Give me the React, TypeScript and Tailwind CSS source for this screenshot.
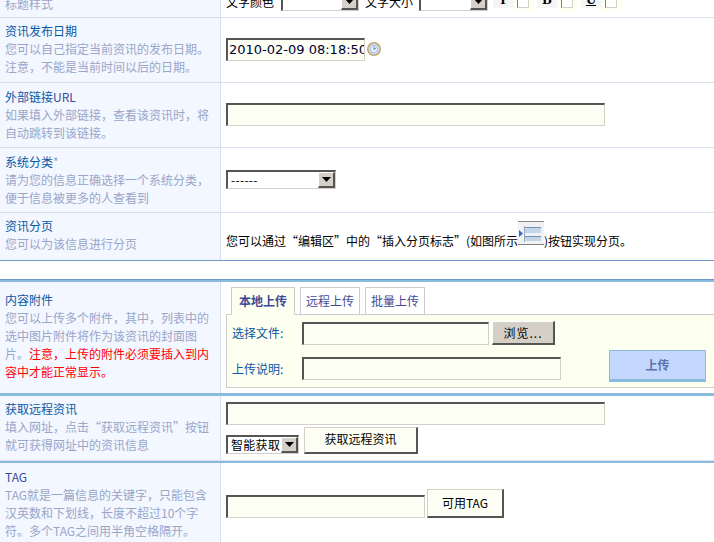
import React from 'react';

const cjk = "font-['Noto_Sans_CJK_SC',sans-serif]";

const insetBox = 'border-2 border-t-[#555555] border-l-[#555555] border-r-[#d4d0c8] border-b-[#d4d0c8] border-r-[1px] border-b-[1px] bg-[#fdfff5]';
const outsetBtn = 'border-t-[1px] border-l-[1px] border-b-2 border-r-2 border-t-[#d4d0c8] border-l-[#d4d0c8] border-r-[#555555] border-b-[#555555] bg-[#fdfff5] text-xs text-black';

function TextBox({ className, value }: { className: string; value?: string }) {
  return (
    <input
      readOnly
      value={value ?? ''}
      className={`${insetBox} block outline-none ${className}`}
    />
  );
}

function FakeSelect({ className, text }: { className: string; text?: string }) {
  return (
    <div className={`flex border-2 border-t-[#555555] border-l-[#555555] border-r-[#d4d0c8] border-b-[#d4d0c8] border-r-[1px] border-b-[1px] bg-white ${className}`}>
      <span className="flex-1 overflow-hidden pl-[3px] text-xs leading-[16px] tracking-[0.3px] text-black whitespace-nowrap">{text}</span>
      <span className="flex w-[17px] items-center justify-center border-t border-l border-b-2 border-r-2 border-t-white border-l-white border-r-[#555555] border-b-[#555555] bg-[#d4d0c8]">
        <svg width="9" height="5" viewBox="0 0 9 5"><path d="M0 0h9L4.5 5z" fill="#000" /></svg>
      </span>
    </div>
  );
}

function Hint({ title, lines, pt }: { title: React.ReactNode; lines: React.ReactNode[]; pt: string }) {
  return (
    <div className={`w-[221px] shrink-0 border-r border-[#d8e0ee] bg-[#f3f7ff] pl-[5px] ${pt}`}>
      <div className="text-xs leading-[18px] text-[#0b57a4] whitespace-nowrap">{title}</div>
      {lines.map((line, i) => (
        <div key={i} className="text-xs leading-[18px] text-[#9aa6c8] whitespace-nowrap">{line}</div>
      ))}
    </div>
  );
}

function ClockIcon() {
  return (
    <svg width="14" height="14" viewBox="0 0 14 14" className="ml-[2px] shrink-0">
      <circle cx="7" cy="7" r="6.2" fill="#d5e4f7" stroke="#c2a26e" strokeWidth="1.5" />
      <circle cx="7" cy="7" r="3.8" fill="#e8f0fb" stroke="#8fb2dd" strokeWidth="0.8" />
      <path d="M7 4.5V7.5l2-1.5" fill="none" stroke="#6c87a8" strokeWidth="1" />
    </svg>
  );
}

function PageBreakIcon() {
  return (
    <svg width="26" height="24" viewBox="0 0 26 24" className="shrink-0">
      <rect width="26" height="24" fill="#f0f1f4" />
      <rect width="26" height="1" fill="#888888" />
      <rect y="23" width="26" height="1" fill="#808080" />
      <rect x="7" y="7" width="16" height="5" fill="#c4d5ea" />
      <rect x="7" y="6" width="16" height="1" fill="#7d90aa" />
      <rect x="7" y="15" width="16" height="5" fill="#c4d5ea" />
      <rect x="7" y="15" width="16" height="1" fill="#7d90aa" />
      <rect x="6" y="5" width="1" height="16" fill="#9aa8ba" />
      <path d="M1 9l4 3.5L1 16z" fill="#2f6fd0" />
    </svg>
  );
}

function StyleToggle({ letter, className }: { letter: string; className: string }) {
  return (
    <div className="mr-[4px] flex h-[11px] items-start">
      <span className={`h-[8px] w-[20px] overflow-hidden bg-[#f5f5f5] text-center font-['Liberation_Serif',serif] text-[14px] leading-[12px] text-black ${className}`}>
        <span className="-mt-[6px] block">{letter}</span>
      </span>
      <span className="h-[11px] w-[20px] bg-[#fdfff0] pl-[4px]">
        <span className="block h-[8px] w-[12px] border-r border-b border-l border-r-[#d4d0c8] border-b-[#d4d0c8] border-l-[#808080] bg-white" />
      </span>
    </div>
  );
}

function Tab({ children, active, className }: { children: React.ReactNode; active?: boolean; className: string }) {
  return (
    <div className={`flex items-center justify-center border border-[#cccccc] text-xs text-[#3f4a96] ${active ? 'relative z-10 -mb-px h-[28px] border-b-[#fdfff0] bg-[#fdfff0] font-bold' : 'h-[27px] border-b-0 bg-white'} ${className}`}>
      {children}
    </div>
  );
}

export default function App() {
  return (
    <div className={`h-[542px] w-[714px] overflow-hidden bg-white ${cjk}`}>
      {/* cut off row at the top */}
      <div className="flex h-[18px] overflow-hidden border-b border-[#d8e0ee]">
        <div className="h-full w-[221px] shrink-0 overflow-hidden border-r border-[#d8e0ee] bg-[#f3f7ff] pl-[5px]">
          <div className="-mt-[5px] text-xs leading-[18px] text-[#9aa6c8]">标题样式</div>
        </div>
        <div className="flex h-[17px] items-end pb-[6px] pl-[5px]">
          <span className="w-[55px] text-xs leading-[18px] text-black">文字颜色</span>
          <FakeSelect className="h-[19px] w-[78px]" />
          <span className="ml-[6px] w-[54px] text-xs leading-[18px] text-black">文字大小</span>
          <FakeSelect className="h-[19px] w-[69px]" />
          <div className="ml-[5px] flex">
            <StyleToggle letter="I" className="font-bold" />
            <StyleToggle letter="B" className="font-bold" />
            <StyleToggle letter="U" className="font-bold underline" />
          </div>
        </div>
      </div>

      <div className="flex h-[65px] border-b border-[#d8e0ee]">
        <Hint
          pt="pt-[4px]"
          title="资讯发布日期"
          lines={['您可以自己指定当前资讯的发布日期。', '注意，不能是当前时间以后的日期。']}
        />
        <div className="flex items-center pb-[2px] pl-[5px]">
          <TextBox className="h-[23px] w-[139px] pl-[1px] font-['DejaVu_Sans',sans-serif] text-[13px] text-[#000033]" value="2010-02-09 08:18:50" />
          <ClockIcon />
        </div>
      </div>

      <div className="flex h-[65px] border-b border-[#d8e0ee]">
        <Hint
          pt="pt-[5px]"
          title={<>外部链接<span className="text-[#3f4a96]">URL</span></>}
          lines={['如果填入外部链接，查看该资讯时，将', '自动跳转到该链接。']}
        />
        <div className="flex items-center pb-[1px] pl-[5px]">
          <TextBox className="h-[23px] w-[379px]" />
        </div>
      </div>

      <div className="flex h-[65px] border-b border-[#d8e0ee]">
        <Hint
          pt="pt-[5px]"
          title={<>系统分类<span className="text-[#9aa6c8]">*</span></>}
          lines={['请为您的信息正确选择一个系统分类，', '便于信息被更多的人查看到']}
        />
        <div className="flex items-center pb-[2px] pl-[5px]">
          <FakeSelect className="h-[19px] w-[110px]" text="------" />
        </div>
      </div>

      <div className="flex h-[48px] border-b border-[#6f94c8]">
        <Hint pt="pt-[4px]" title="资讯分页" lines={['您可以为该信息进行分页']} />
        <div className="flex items-end pb-[10px] pl-[5px] text-xs leading-[18px] text-black whitespace-nowrap">
          <span>您可以通过“编辑区”中的“插入分页标志”(如图所示</span>
          <span className="mb-[5px]"><PageBreakIcon /></span>
          <span>)按钮实现分页。</span>
        </div>
      </div>

      <div className="h-[18px]" />

      <div className="border-t border-[#6f94c8]" />
      <div className="border-t-2 border-[#88bbdd]" />

      <div className="flex h-[111px]">
        <Hint
          pt="pt-[9px]"
          title="内容附件"
          lines={[
            '您可以上传多个附件，其中，列表中的',
            '选中图片附件将作为该资讯的封面图',
            <>片。<span className="text-[#ff0000]">注意，上传的附件必须要插入到内</span></>,
            <span className="text-[#ff0000]">容中才能正常显示。</span>,
          ]}
        />
        <div className="flex-1 pl-[5px] pt-[5px]">
          <div className="flex gap-[5px] pl-[5px]">
            <Tab active className="w-[64px]">本地上传</Tab>
            <Tab className="w-[60px]">远程上传</Tab>
            <Tab className="w-[60px]">批量上传</Tab>
          </div>
          <div className="flex h-[74px] justify-between border-t border-b border-l border-[#cccccc] bg-[#fdfff0]">
            <div className="pl-[5px] pt-[6px]">
              <div className="flex items-center">
                <span className="w-[70px] text-xs leading-[18px] text-[#0b57a4]">选择文件:</span>
                <TextBox className="h-[23px] w-[187px]" />
                <button className="ml-[3px] h-[24px] w-[63px] border-t border-l border-b-2 border-r-2 border-t-white border-l-white border-r-[#555555] border-b-[#555555] bg-[#d4d0c8] text-xs tracking-[1px] text-black">浏览...</button>
              </div>
              <div className="mt-[12px] flex items-center">
                <span className="w-[70px] text-xs leading-[18px] text-[#0b57a4]">上传说明:</span>
                <TextBox className="h-[23px] w-[259px]" />
              </div>
            </div>
            <div className="pr-[8px] pt-[35px]">
              <button className="h-[32px] w-[97px] border border-b-[3px] border-[#88bbdd] bg-[#c4d8fd] text-xs font-bold text-[#5c72ad]">上传</button>
            </div>
          </div>
        </div>
      </div>

      <div className="border-t-[3px] border-[#88bbdd]" />

      <div className="flex h-[65px] border-b border-[#d8e0ee]">
        <Hint
          pt="pt-[4px]"
          title="获取远程资讯"
          lines={['填入网址，点击“获取远程资讯”按钮', '就可获得网址中的资讯信息']}
        />
        <div className="pl-[5px] pt-[6px]">
          <TextBox className="h-[23px] w-[379px]" />
          <div className="mt-[2px] flex items-end">
            <FakeSelect className="h-[19px] w-[73px]" text="智能获取" />
            <button className={`ml-[5px] h-[27px] w-[114px] pb-[3px] ${outsetBtn}`}>获取远程资讯</button>
          </div>
        </div>
      </div>

      <div className="border-t-[2px] border-[#88bbdd]" />

      <div className="flex h-[79px]">
        <Hint
          pt="pt-[5px]"
          title={<span className="text-[#3f4a96]">TAG</span>}
          lines={['TAG就是一篇信息的关键字，只能包含', '汉英数和下划线，长度不超过10个字', '符。多个TAG之间用半角空格隔开。']}
        />
        <div className="flex items-end pb-[24px] pl-[5px]">
          <TextBox className="h-[23px] w-[199px]" />
          <button className={`ml-[2px] h-[29px] w-[77px] ${outsetBtn}`}>可用TAG</button>
        </div>
      </div>
    </div>
  );
}
